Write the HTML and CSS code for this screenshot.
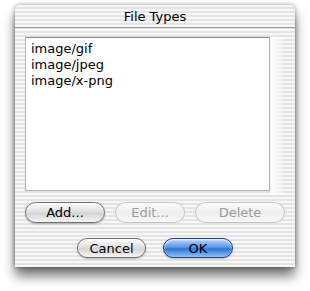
FILE: index.html
```html
<!DOCTYPE html>
<html lang="en">
  <head>
    <meta charset="UTF-8" />
    <title>File Types</title>
    <link rel="stylesheet" href="styles.css">
  </head>
  <body>
    <div class="dialog">
      <div class="title-bar">File Types</div>
      <div class="content">
        <div class="list-wrap">
          <ul class="type-list">
            <li>image/gif</li>
            <li>image/jpeg</li>
            <li>image/x-png</li>
          </ul>
        </div>
        <div class="row edit-row">
          <button class="btn btn-add">Add...</button>
          <button class="btn btn-edit" disabled>Edit...</button>
          <button class="btn btn-delete" disabled>Delete</button>
        </div>
        <div class="row confirm-row">
          <button class="btn btn-cancel">Cancel</button>
          <button class="btn btn-ok">OK</button>
        </div>
      </div>
    </div>
  </body>
</html>
```

FILE: styles.css
```css
html,
body {
  height: 100%;
}
body {
  margin: 0;
  padding-top: 5px;
  box-sizing: border-box;
  background: #fff;
  font-family: "DejaVu Sans", Verdana, sans-serif;
  font-size: 13px;
  color: #000;
}
.dialog {
  width: 280px;
  height: 262px;
  margin: 0 15px;
  border-radius: 5px 5px 0 0;
  background: repeating-linear-gradient(
    to bottom,
    #f7f7f7 0px,
    #f7f7f7 2px,
    #e4e4e4 2px,
    #e4e4e4 4px
  );
  box-shadow: 0 9px 12px rgba(0, 0, 0, 0.55), 0 0 4px rgba(0, 0, 0, 0.4);
  display: flex;
  flex-direction: column;
}
.title-bar {
  height: 22px;
  line-height: 24px;
  text-align: center;
  border-bottom: 1px solid #9a9a9a;
  border-radius: 5px 5px 0 0;
  color: #000;
}
.content {
  padding: 9px 10px 0;
  display: flex;
  flex-direction: column;
}
.list-wrap {
  width: 258px;
  height: 158px;
  background:
    linear-gradient(to right, transparent 245px, rgba(255, 255, 255, 0.95) 246px, rgba(255, 255, 255, 0.3) 258px);
}
.type-list {
  list-style: none;
  margin: 0;
  padding: 3px 5px;
  width: 233px;
  height: 146px;
  background: #fff;
  border: 1px solid #b4b4b4;
  border-top-color: #8c8c8c;
}
.type-list li {
  height: 16px;
  line-height: 16px;
}
.row {
  display: flex;
}
.edit-row {
  margin-top: 7px;
  gap: 10px;
}
.confirm-row {
  margin-top: 15px;
  justify-content: center;
  gap: 17px;
}
.btn {
  height: 21px;
  padding: 0;
  font-family: inherit;
  font-size: 13px;
  color: #000;
  border: 1px solid #6f6f6f;
  border-radius: 11px;
  background: linear-gradient(to bottom, #fdfdfd 0%, #e0e0e0 45%, #d4d4d4 55%, #f6f6f6 100%);
  box-shadow: inset 0 1px 2px rgba(255, 255, 255, 0.9), 0 1px 2px rgba(0, 0, 0, 0.25);
}
.btn:disabled {
  color: #9c9c9c;
  border-color: #c4c4c4;
  background: linear-gradient(to bottom, #fafafa 0%, #eeeeee 50%, #f7f7f7 100%);
  box-shadow: none;
}
.btn-add { width: 80px; }
.btn-edit { width: 70px; }
.btn-delete { width: 90px; }
.btn-cancel { width: 69px; height: 20px; }
.btn-ok {
  width: 70px;
  height: 20px;
  border-color: #1d3f8a;
  background: linear-gradient(to bottom, #bcd6f8 0%, #5d98e8 45%, #2f74d6 55%, #8cc3fb 100%);
}
```
